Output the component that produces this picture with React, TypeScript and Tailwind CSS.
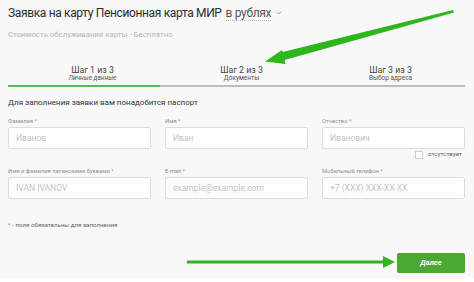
import React from "react";

const font = { fontFamily: "Roboto, 'Noto Sans', sans-serif" };

function Field({ label, placeholder }: { label: string; placeholder: string }) {
  return (
    <div className="flex flex-col">
      <div className="text-[5.8px] leading-[8px] text-[#8f8f8f]">
        {label} <span className="text-[#e57373]">*</span>
      </div>
      <div className="mt-[2px] h-[22px] border border-[#dcdcdc] bg-white rounded-[2px] flex items-center pl-[7px] text-[8.5px] text-[#c2c2c2]">
        {placeholder}
      </div>
    </div>
  );
}

export default function App() {
  return (
    <div className="relative w-[474px] h-[282px] overflow-hidden bg-white" style={font}>
      <div className="h-[278px] bg-[#f8f8f8] pl-[8px] pr-[9px]">
        <div className="pt-[4px] leading-[18px] text-[12px] tracking-[-0.35px] text-[#2b2b2b] flex items-center">
          <span>Заявка на карту Пенсионная карта МИР</span>
          <span className="ml-[4px] text-[#555] border-b border-dotted border-[#bbb] leading-[14px]">в рублях</span>
          <svg className="ml-[5px]" width="6" height="4" viewBox="0 0 6 4">
            <path d="M0.5 0.5 L3 3 L5.5 0.5" fill="none" stroke="#999" strokeWidth="0.9" />
          </svg>
        </div>
        <div className="mt-[7px] leading-[12px] text-[7.8px] text-[#b5b5b5]">
          Стоимость обслуживания карты - Бесплатно
        </div>

        <div className="mt-[24px] flex pl-[10px]">
          {[
            ["Шаг 1 из 3", "Личные данные", true],
            ["Шаг 2 из 3", "Документы", false],
            ["Шаг 3 из 3", "Выбор адреса", false],
          ].map(([t, s, italic], i) => (
            <div key={i} className="w-[150px] flex flex-col items-center">
              <div className="text-[8.8px] leading-[10px] text-[#444]">{t as string}</div>
              <div className={`text-[6.5px] leading-[7px] text-[#555] ${italic ? "italic" : ""}`}>{s as string}</div>
            </div>
          ))}
        </div>
        <div className="mt-[3px] h-[2px] flex">
          <div className="w-[152px] bg-[#5cb85c]" />
          <div className="flex-1 bg-[#bdbdbd]" />
        </div>

        <div className="mt-[10px] leading-[12px] text-[8px] text-[#333]">
          Для заполнения заявки вам понадобится паспорт
        </div>

        <div className="mt-[8px] grid grid-cols-3 gap-x-[14px]">
          <Field label="Фамилия" placeholder="Иванов" />
          <Field label="Имя" placeholder="Иван" />
          <Field label="Отчество" placeholder="Иванович" />
        </div>
        <div className="mt-[2px] h-[8px] flex justify-end items-center pr-[3px]">
          <div className="w-[8px] h-[8px] border border-[#cfcfcf] bg-white" />
          <span className="ml-[5px] text-[6.2px] text-[#666]">отсутствует</span>
        </div>
        <div className="mt-[8px] grid grid-cols-3 gap-x-[14px]">
          <Field label="Имя и фамилия латинскими буквами" placeholder="IVAN IVANOV" />
          <Field label="E-mail" placeholder="example@example.com" />
          <Field label="Мобильный телефон" placeholder="+7 (XXX) XXX-XX-XX" />
        </div>

        <div className="mt-[21px] leading-[10px] text-[6.2px] text-[#666]">
          <span className="text-[#e57373]">*</span> - поля обязательны для заполнения
        </div>

        <div className="mt-[23px] flex justify-end">
          <div className="w-[68px] h-[20px] rounded-[2px] bg-[#4aa833] flex items-center justify-center text-white text-[7.5px] italic font-bold">
            Далее
          </div>
        </div>
      </div>

      <svg className="absolute left-0 top-0 pointer-events-none" width="474" height="282" viewBox="0 0 474 282">
        <polygon points="453,10 454,12.5 281,61 278.5,53" fill="#2fb51e" />
        <polygon points="265,61.5 282,50 285.5,64" fill="#2fb51e" />
        <rect x="187" y="260.5" width="198" height="3" fill="#2fb51e" />
        <polygon points="395,262 383,256 383,268" fill="#2fb51e" />
      </svg>
    </div>
  );
}
